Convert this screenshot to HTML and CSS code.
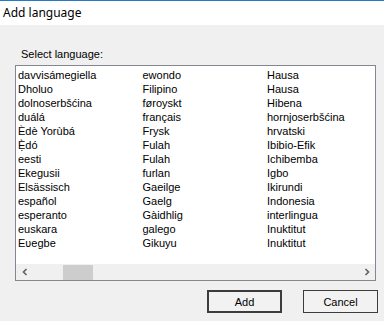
FILE: index.html
```html
<!DOCTYPE html>
<html lang="en">
<head>
  <meta charset="UTF-8" />
  <title>Add language</title>
  <link rel="stylesheet" href="styles.css">
</head>
<body>

  <div class="titlebar">Add language</div>

  <div class="dialog">
    <div class="label">Select language:</div>

    <div class="listbox">
      <div class="columns">
        <ul class="col">
          <li>davvisámegiella</li>
          <li>Dholuo</li>
          <li>dolnoserbšćina</li>
          <li>duálá</li>
          <li>Èdè Yorùbá</li>
          <li>Ẹ̀dó</li>
          <li>eesti</li>
          <li>Ekegusii</li>
          <li>Elsässisch</li>
          <li>español</li>
          <li>esperanto</li>
          <li>euskara</li>
          <li>Eʋegbe</li>
        </ul>
        <ul class="col">
          <li>ewondo</li>
          <li>Filipino</li>
          <li>føroyskt</li>
          <li>français</li>
          <li>Frysk</li>
          <li>Fulah</li>
          <li>Fulah</li>
          <li>furlan</li>
          <li>Gaeilge</li>
          <li>Gaelg</li>
          <li>Gàidhlig</li>
          <li>galego</li>
          <li>Gikuyu</li>
        </ul>
        <ul class="col">
          <li>Hausa</li>
          <li>Hausa</li>
          <li>Hibena</li>
          <li>hornjoserbšćina</li>
          <li>hrvatski</li>
          <li>Ibibio-Efik</li>
          <li>Ichibemba</li>
          <li>Igbo</li>
          <li>Ikirundi</li>
          <li>Indonesia</li>
          <li>interlingua</li>
          <li>Inuktitut</li>
          <li>Inuktitut</li>
        </ul>
      </div>

      <div class="hscroll">
        <span class="arrow">
          <svg width="8" height="8" viewBox="0 0 8 8"><path d="M5.5 1 L2.5 4 L5.5 7" fill="none" stroke="#606060" stroke-width="1.6"/></svg>
        </span>
        <div class="track"><div class="thumb"></div></div>
        <span class="arrow">
          <svg width="8" height="8" viewBox="0 0 8 8"><path d="M2.5 1 L5.5 4 L2.5 7" fill="none" stroke="#606060" stroke-width="1.6"/></svg>
        </span>
      </div>
    </div>

    <div class="buttons">
      <button class="btn default">Add</button>
      <button class="btn">Cancel</button>
    </div>
  </div>

</body>
</html>
```

FILE: styles.css
```css
body {
  margin: 0;
  width: 384px;
  height: 321px;
  background: #f0f0f0;
  font-family: "Liberation Sans", Arial, sans-serif;
  font-size: 11px;
  color: #000;
  overflow: hidden;
}
.titlebar {
  height: 24px;
  background: #fff;
  border-top: 1px solid #2b79c2;
  padding-left: 3px;
  font-family: "Noto Sans", "Open Sans", sans-serif;
  font-size: 12px;
  line-height: 24px;
}
.dialog {
  padding: 0 0 0 15px;
}
.label {
  padding: 23px 0 0 6px;
  height: 17px;
  line-height: 13px;
}

/* list box */
.listbox {
  width: 359px;
  height: 214px;
  border: 1px solid #828790;
  background: #fff;
  display: flex;
  flex-direction: column;
}
.columns {
  flex: 1;
  display: flex;
  padding: 2px 0 0 2px;
  overflow: hidden;
}
.col {
  list-style: none;
  margin: 0;
  padding: 0;
  width: 124.5px;
  flex-shrink: 0;
}
.col li {
  height: 14px;
  line-height: 14px;
  white-space: nowrap;
}
.hscroll {
  height: 16px;
  display: flex;
  align-items: center;
  background: #f0f0f0;
}
.arrow {
  width: 17px;
  height: 16px;
  display: flex;
  align-items: center;
  justify-content: center;
}
.track {
  flex: 1;
  height: 16px;
  display: flex;
  align-items: center;
}
.thumb {
  margin-left: 30px;
  width: 30px;
  height: 15px;
  background: #cdcdcd;
}

/* buttons */
.buttons {
  display: flex;
  gap: 21px;
  padding: 9px 0 0 192px;
}
.btn {
  flex: 0 0 75px;
  width: 75px;
  height: 23px;
  margin: 0;
  padding: 0;
  box-sizing: border-box;
  background: #f2f2f2;
  border: 1px solid #3c3c3c;
  font-family: "Liberation Sans", Arial, sans-serif;
  font-size: 11px;
  color: #000;
}
.btn.default {
  border: 2px solid #3c3c3c;
}
```
